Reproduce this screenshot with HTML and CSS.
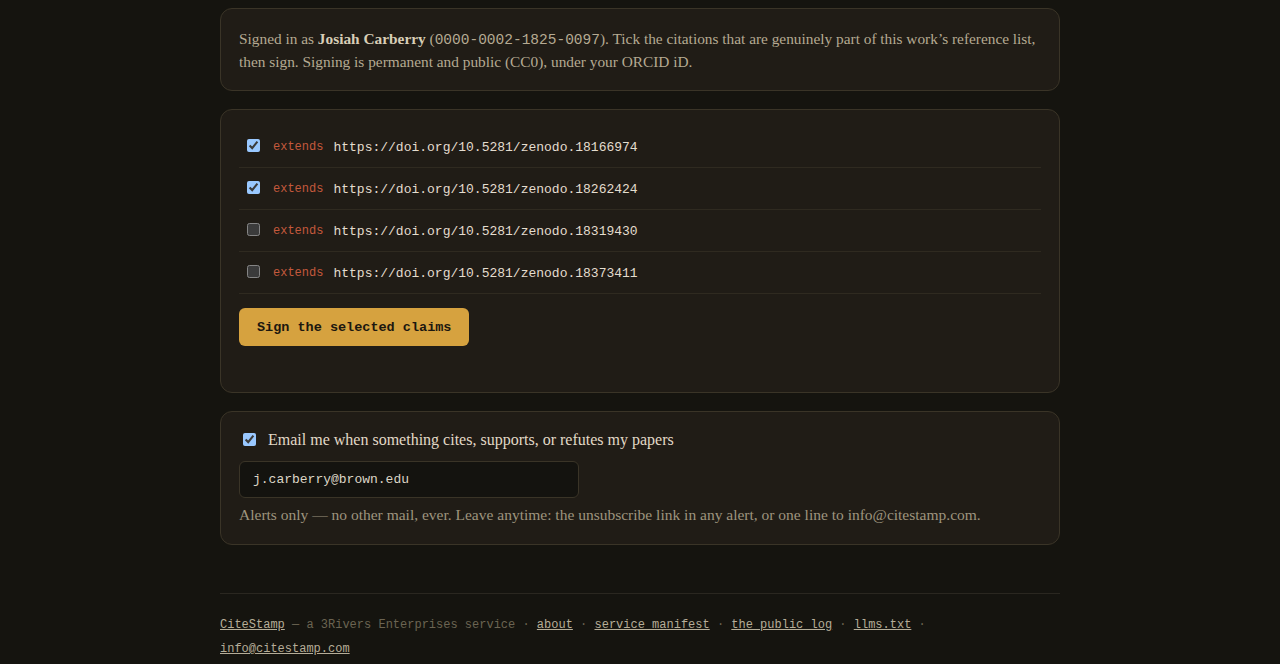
FILE: index.html
```html
<!DOCTYPE html>
<html lang="en">
<head>
<meta charset="utf-8">
<title>CiteStamp — sign claims</title>
<link rel="stylesheet" href="styles.css">
</head>
<body>
<main class="wrap">
  <section class="card intro">
    <p class="lead">Signed in as <strong class="name">Josiah Carberry</strong> (<span class="orcid">0000-0002-1825-0097</span>). Tick the citations that are genuinely part of this work’s reference list, then sign. Signing is permanent and public (CC0), under your ORCID iD.</p>
  </section>

  <section class="card claims">
    <form class="claim-form">
      <ul class="claim-list">
        <li class="claim"><label class="claim-label"><input type="checkbox" checked><span class="rel">extends</span><span class="url">https://doi.org/10.5281/zenodo.18166974</span></label></li>
        <li class="claim"><label class="claim-label"><input type="checkbox" checked><span class="rel">extends</span><span class="url">https://doi.org/10.5281/zenodo.18262424</span></label></li>
        <li class="claim"><label class="claim-label"><input type="checkbox"><span class="rel">extends</span><span class="url">https://doi.org/10.5281/zenodo.18319430</span></label></li>
        <li class="claim"><label class="claim-label"><input type="checkbox"><span class="rel">extends</span><span class="url">https://doi.org/10.5281/zenodo.18373411</span></label></li>
      </ul>
      <button type="button" class="btn-sign">Sign the selected claims</button>
    </form>
  </section>

  <section class="card alerts">
    <label class="alert-label"><input type="checkbox" checked><span>Email me when something cites, supports, or refutes my papers</span></label>
    <input class="email" type="email" value="j.carberry@brown.edu">
    <p class="note">Alerts only — no other mail, ever. Leave anytime: the unsubscribe link in any alert, or one line to info@citestamp.com.</p>
  </section>

  <footer class="footer">
    <p class="foot-line"><a href="#">CiteStamp</a> — a 3Rivers Enterprises service · <a href="#">about</a> · <a href="#">service manifest</a> · <a href="#">the public log</a> · <a href="#">llms.txt</a> · <a href="#">info@citestamp.com</a></p>
  </footer>
</main>
</body>
</html>
```

FILE: styles.css
```css
:root {
  color-scheme: dark;
}
* { box-sizing: border-box; }
html, body {
  margin: 0;
  background: #15140f;
}
body {
  font-family: "Liberation Serif", "DejaVu Serif", serif;
  color: #b5aa92;
  font-size: 15.5px;
  line-height: 23px;
}
.wrap {
  width: 840px;
  margin: 0 auto;
  padding-top: 8px;
  display: flex;
  flex-direction: column;
  gap: 18px;
}
.card {
  background: #201c16;
  border: 1px solid #3a3427;
  border-radius: 12px;
  padding: 17px 18px;
}
.lead {
  margin: 0;
  font-size: 15.35px;
  padding-top: 1px;
}
.name { color: #d8ceb6; }
.orcid {
  font-family: "Liberation Mono", "DejaVu Sans Mono", monospace;
  font-size: 14.5px;
  line-height: 1;
}
.claims { padding: 16px 18px 46px; }
.claim-form { display: flex; flex-direction: column; align-items: flex-start; }
.claim-list {
  list-style: none;
  margin: 0;
  padding: 0;
  width: 100%;
}
.claim {
  border-bottom: 1px solid #2f2a20;
  height: 42px;
  display: flex;
  align-items: center;
}
.claim-label {
  display: flex;
  align-items: center;
  padding-left: 4px;
  font-family: "Liberation Mono", "DejaVu Sans Mono", monospace;
}
.claim-label input {
  margin: 0 13px 2px 4px;
  width: 13px;
  height: 13px;
}
.rel {
  color: #c4593c;
  font-size: 12px;
  margin-right: 10px;
  padding-top: 2px;
}
.url {
  color: #e4ddcf;
  font-size: 13px;
  padding-top: 1px;
}
.btn-sign {
  margin-top: 14px;
  height: 38px;
  padding: 0 18px;
  border: 0;
  border-radius: 6px;
  background: #d6a23f;
  color: #1c170f;
  font-family: "Liberation Mono", "DejaVu Sans Mono", monospace;
  font-weight: 700;
  font-size: 13.5px;
}
.alerts { padding: 16px 18px 18px; display: flex; flex-direction: column; align-items: flex-start; }
.alert-label {
  display: flex;
  align-items: center;
  color: #e2d9c7;
  font-size: 16px;
  padding-left: 4px;
}
.alert-label input {
  margin: 0 12px 0 0;
  width: 13px;
  height: 13px;
}
.email {
  margin-top: 10px;
  width: 340px;
  height: 37px;
  padding: 0 13px;
  background: #14130f;
  border: 1px solid #3a3427;
  border-radius: 6px;
  color: #ddd6c6;
  font-family: "Liberation Mono", "DejaVu Sans Mono", monospace;
  font-size: 13px;
}
.note {
  margin: 5px 0 0;
  color: #9e947e;
}
.footer {
  margin-top: 30px;
  border-top: 1px solid #2a2720;
  padding-top: 19px;
}
.foot-line {
  margin: 0;
  font-family: "Liberation Mono", "DejaVu Sans Mono", monospace;
  font-size: 12px;
  line-height: 24px;
  color: #6b6452;
}
.foot-line a {
  color: #b5ad98;
  text-decoration: underline;
}
```
